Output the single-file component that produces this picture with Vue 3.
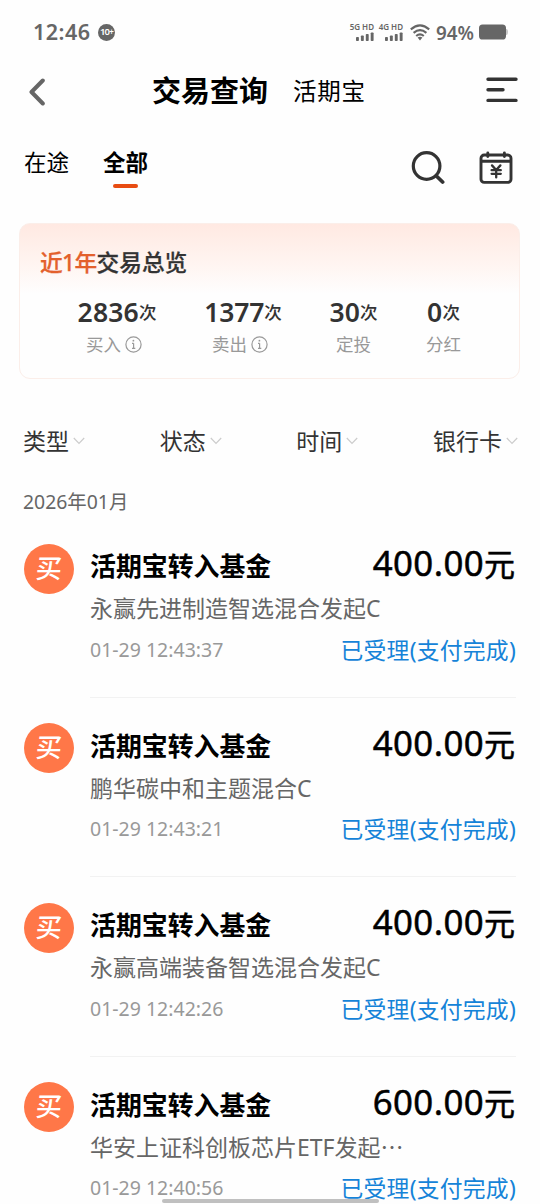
<script setup>
const bars = [4, 5.5, 7, 8.5]
const signals = ['5G HD', '4G HD']
const stats = [
  { key: 'buy', count: '2836', label: '买入', info: true },
  { key: 'sell', count: '1377', label: '卖出', info: true },
  { key: 'plan', count: '30', label: '定投', info: false },
  { key: 'bonus', count: '0', label: '分红', info: false },
]
const filters = ['类型', '状态', '时间', '银行卡']
const records = [
  { name: '永赢先进制造智选混合发起C', more: false, time: '01-29 12:43:37', amount: '400.00' },
  { name: '鹏华碳中和主题混合C', more: false, time: '01-29 12:43:21', amount: '400.00' },
  { name: '永赢高端装备智选混合发起C', more: false, time: '01-29 12:42:26', amount: '400.00' },
  { name: '华安上证科创板芯片ETF发起', more: true, time: '01-29 12:40:56', amount: '600.00' },
]
</script>

<template>
  <div class="screen">
    <div class="status-bar">
      <span class="clock">12:46</span>
      <span class="badge">10<i>+</i></span>
      <div class="status-right">
        <div v-for="s in signals" :key="s" class="signal">
          <span>{{ s }}</span>
          <svg width="18" height="9" viewBox="0 0 18 9">
            <rect v-for="(h, i) in bars" :key="i" :x="i * 4.9" :y="9 - h" width="2.9" :height="h" rx="0.8" fill="#666" />
          </svg>
        </div>
        <svg class="wifi" width="20" height="17" viewBox="0 0 20 17" fill="none" stroke="#666" stroke-width="2.1">
          <path d="M.8 5.4Q10-2.6 19.2 5.4" />
          <path d="M3.6 8.9Q10 3.3 16.4 8.9" />
          <path d="M6.2 12Q10 8.8 13.8 12" />
          <path d="M7.6 13.6Q10 12 12.4 13.6L10 16.4Z" fill="#666" stroke="none" />
        </svg>
        <span class="percent">94%</span>
        <svg class="battery" width="30" height="16" viewBox="0 0 30 16">
          <path d="M26 5h1.2q1.8 0 1.8 3t-1.8 3H26z" fill="#c8c8c8" />
          <rect x="0" y="0.5" width="27" height="15" rx="3.6" fill="#666" />
        </svg>
      </div>
    </div>

    <header class="nav">
      <svg class="back" width="18" height="28" viewBox="0 0 18 28" fill="none" stroke="#666" stroke-width="4" stroke-linecap="round" stroke-linejoin="round">
        <path d="M14.8 2.5L3.5 14L14.8 25.5" />
      </svg>
      <h1>交易查询</h1>
      <span class="sub">活期宝</span>
      <svg class="menu" width="32" height="26" viewBox="0 0 32 26" fill="none" stroke="#333" stroke-width="3.4" stroke-linecap="round">
        <path d="M2 2.2H30M2 12.8H17M2 23.4H30" />
      </svg>
    </header>

    <div class="tabs">
      <span class="tab">在途</span>
      <span class="tab active">全部</span>
      <svg class="search" width="34" height="34" viewBox="0 0 34 34" fill="none" stroke="#333" stroke-width="3.2" stroke-linecap="round">
        <circle cx="15.6" cy="15" r="13.3" />
        <path d="M25.4 25L31.6 31" stroke-width="3.8" />
      </svg>
      <svg class="calendar" width="34" height="34" viewBox="0 0 34 34" fill="none" stroke="#333" stroke-width="2.9" stroke-linecap="round">
        <rect x="2" y="4" width="30" height="27.4" rx="3.2" />
        <path d="M2.5 10.3H31.5M8.8 1.9V5.6M25.4 1.9V5.6" />
        <path d="M13 14.4L17.2 19L21.4 14.4M12.6 19.2H21.8M12.6 22.8H21.8M17.2 19V26.4" stroke-width="2.3" />
      </svg>
    </div>

    <section class="card">
      <h2><em>近1年</em>交易总览</h2>
      <div class="stats">
        <div v-for="s in stats" :key="s.key" class="stat" :class="s.key">
          <div class="count">{{ s.count }}<small>次</small></div>
          <div class="label">
            {{ s.label }}
            <svg v-if="s.info" width="17" height="17" viewBox="0 0 17 17" fill="none" stroke="#999">
              <circle cx="8.5" cy="8.5" r="7.6" stroke-width="1.2" />
              <path d="M8.6 7.3V12.3M7 7.4H8.6M7 12.4H10.3" stroke-width="1.2" />
              <circle cx="8.4" cy="4.7" r="0.9" fill="#999" stroke="none" />
            </svg>
          </div>
        </div>
      </div>
    </section>

    <div class="filters">
      <div v-for="f in filters" :key="f" class="filter">
        <span>{{ f }}</span>
        <svg width="12" height="8" viewBox="0 0 12 8" fill="none" stroke="#ccc" stroke-width="1.2">
          <path d="M.8 1L6 6.4L11.2 1" />
        </svg>
      </div>
    </div>

    <div class="month">2026年01月</div>

    <main>
      <article v-for="r in records" :key="r.time" class="record">
        <div class="icon"><span>买</span></div>
        <div class="body">
          <div class="line top">
            <span class="title">活期宝转入基金</span>
            <span class="amount">{{ r.amount }}<b>元</b></span>
          </div>
          <div class="name">{{ r.name }}<span v-if="r.more" class="dots">…</span></div>
          <div class="line bottom">
            <span class="time">{{ r.time }}</span>
            <span class="state">已受理(支付完成)</span>
          </div>
        </div>
      </article>
    </main>
    <div class="home-bar"></div>
  </div>
</template>

<style>
body {
  margin: 0;
  background: #fefefe;
}
</style>

<style scoped>
.screen {
  position: relative;
  box-sizing: border-box;
  width: 540px;
  height: 1204px;
  overflow: hidden;
  background: #fefefe;
  color: #333;
  font-family: 'Noto Sans', 'Noto Sans CJK SC', sans-serif;
  white-space: nowrap;
}
.status-bar {
  display: flex;
  align-items: center;
  height: 64px;
  padding: 0 32px 0 33px;
  box-sizing: border-box;
  color: #666;
}
.clock {
  width: 65px;
  font-size: 21.5px;
  font-weight: 600;
  line-height: 30px;
  letter-spacing: 0.5px;
}
.badge {
  width: 17px;
  height: 17px;
  border-radius: 50%;
  background: #666;
  color: #fff;
  font-size: 9.5px;
  font-weight: 600;
  line-height: 16px;
  text-align: center;
  letter-spacing: -0.8px;
}
.badge i {
  font-size: 8px;
  font-style: normal;
}
.status-right {
  display: flex;
  align-items: center;
  margin-left: auto;
}
.signal {
  display: flex;
  flex-direction: column;
  align-items: flex-end;
  width: 25px;
  margin-right: 4px;
}
.signal span {
  font-size: 8px;
  font-weight: 600;
  line-height: 8px;
}
.signal svg {
  margin-top: 1px;
}
.wifi {
  margin-left: 3px;
}
.percent {
  width: 43px;
  margin-left: 6px;
  font-size: 18.8px;
  font-weight: 600;
  line-height: 30px;
  padding-top: 2px;
}
.battery {
  margin-right: -1px;
}
.status-right .signal {
  position: relative;
  left: -2px;
}
.wifi {
  margin-left: 1px;
}
.nav {
  display: flex;
  align-items: center;
  height: 54px;
  padding: 0 22px 0 28px;
}
.back {
  width: 18px;
  margin-top: 1px;
}
h1 {
  margin: 0 0 0 106px;
  width: 141px;
  font-size: 29px;
  font-weight: 700;
  line-height: 40px;
  color: #000;
}
.sub {
  font-size: 23.5px;
  line-height: 40px;
  letter-spacing: 0.7px;
  color: #000;
}
.menu {
  margin-left: auto;
  margin-top: -3px;
}
.tabs {
  display: flex;
  align-items: flex-start;
  height: 105px;
  padding: 27px 27px 0 24px;
  box-sizing: border-box;
}
.tab {
  width: 46px;
  margin-right: 33px;
  font-size: 22.5px;
  line-height: 36px;
  color: #000;
}
.tab.active {
  font-weight: 700;
}
.tab.active::after {
  content: '';
  display: block;
  width: 25px;
  height: 4px;
  margin: 3px 0 0 10px;
  border-radius: 2px;
  background: #e84c12;
}
.search {
  margin: 6px 34px 0 auto;
}
.calendar {
  margin-top: 6px;
}
.card {
  box-sizing: border-box;
  height: 156px;
  margin: 0 20px 0 19px;
  padding: 21px 0 0 20px;
  border: 1px solid #fbeee9;
  border-radius: 11px;
  background: linear-gradient(#ffe9e2 0, #fff4f0 38px, #fefefe 70px);
}
h2 {
  margin: 0;
  font-size: 22.7px;
  font-weight: 500;
  line-height: 36px;
  -webkit-text-stroke: 0.25px currentColor;
}
em {
  font-style: normal;
  color: #e3602c;
  letter-spacing: -0.6px;
}
.stats {
  display: flex;
  gap: 47.5px;
  padding: 13px 0 0 36.5px;
}
.stat {
  display: flex;
  flex-direction: column;
  align-items: center;
}
.buy {
  width: 81px;
}
.sell {
  width: 76px;
}
.plan {
  width: 50px;
}
.bonus {
  width: 35px;
}
.count {
  display: flex;
  align-items: center;
  font-size: 26.5px;
  font-weight: 600;
  line-height: 36px;
  letter-spacing: 0.2px;
}
.sell .count {
  letter-spacing: -0.2px;
}
.count small {
  font-size: 17.5px;
  font-weight: 500;
  letter-spacing: 0;
}
.label {
  display: flex;
  align-items: center;
  gap: 4px;
  margin-top: 1px;
  font-size: 17.5px;
  line-height: 26px;
  color: #999;
}
.buy .label,
.sell .label {
  margin-right: 6px;
}
.filters {
  display: flex;
  justify-content: space-between;
  height: 36px;
  margin-top: 44px;
  padding: 0 22px 0 23px;
}
.filter {
  display: flex;
  align-items: center;
  gap: 4px;
  font-size: 23px;
  line-height: 36px;
}
.month {
  margin-top: 29px;
  padding-left: 23px;
  font-size: 19.4px;
  line-height: 28px;
  color: #666;
}
main {
  padding: 12px 24px 0;
}
.record {
  display: flex;
  height: 179.5px;
}
.icon {
  width: 50px;
  height: 50px;
  margin-top: 15.5px;
  border-radius: 50%;
  background: #ff7748;
  color: #fff;
  text-align: center;
}
.icon span {
  display: block;
  font-size: 26px;
  font-weight: 500;
  line-height: 49px;
  transform: skewX(-4deg);
}
.body {
  flex: 1;
  box-sizing: border-box;
  height: 169.5px;
  margin-left: 16px;
  padding-top: 15px;
  border-bottom: 1px solid #f2f2f2;
}
.line {
  display: flex;
  justify-content: space-between;
  align-items: center;
}
.top {
  height: 44px;
  color: #000;
}
.title {
  font-size: 25.9px;
  font-weight: 700;
}
.amount {
  margin: -3px 1px 0 0;
  font-size: 34.8px;
  font-weight: 400;
  letter-spacing: 0.4px;
  line-height: 44px;
  -webkit-text-stroke: 0.5px #000;
}
.amount b {
  font-size: 31px;
  font-weight: 400;
  letter-spacing: 0;
}
.name {
  margin-top: 3px;
  font-size: 23px;
  line-height: 36px;
  color: #666;
}
.dots {
  font-family: 'Noto Sans CJK SC', sans-serif;
  line-height: 1;
}
.bottom {
  height: 36px;
  margin-top: 5px;
}
.time {
  font-size: 19.5px;
  color: #999;
}
.state {
  font-size: 22.8px;
  letter-spacing: 0.25px;
  color: #1583d8;
}
.home-bar {
  position: absolute;
  left: 162px;
  bottom: 1px;
  width: 217px;
  height: 4px;
  border-radius: 2px;
  background: #c0c0c0;
}
</style>
